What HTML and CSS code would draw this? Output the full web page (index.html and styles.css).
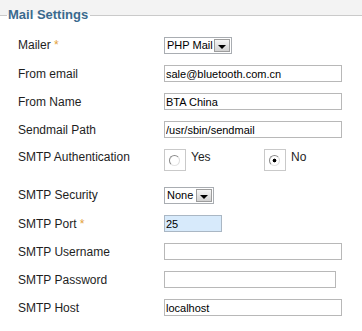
FILE: index.html
```html
<!DOCTYPE html>
<html lang="en">
<head>
    <meta charset="UTF-8">
    <meta name="viewport" content="width=device-width, initial-scale=1.0">
    <title>Mail Settings</title>
    <link rel="stylesheet" href="styles.css">
</head>
<body>
<form class="settings">
    <fieldset class="panel">
        <legend>Mail Settings</legend>
        <div class="rows">
            <div class="row">
                <label class="label">Mailer <span class="req">*</span></label>
                <div class="select select-mailer">
                    <span class="select-value">PHP Mail</span>
                    <span class="select-btn"></span>
                </div>
            </div>
            <div class="row">
                <label class="label" for="mailfrom">From email</label>
                <input class="text" id="mailfrom" type="text" value="sale@bluetooth.com.cn">
            </div>
            <div class="row">
                <label class="label" for="fromname">From Name</label>
                <input class="text" id="fromname" type="text" value="BTA China">
            </div>
            <div class="row">
                <label class="label" for="sendmail">Sendmail Path</label>
                <input class="text" id="sendmail" type="text" value="/usr/sbin/sendmail">
            </div>
            <div class="row row-radio">
                <span class="label">SMTP Authentication</span>
                <div class="radio-group">
                    <label class="radio-opt">
                        <span class="radio-box"><input type="radio" name="smtpauth" value="1"></span>
                        <span class="radio-text">Yes</span>
                    </label>
                    <label class="radio-opt">
                        <span class="radio-box"><input type="radio" name="smtpauth" value="0" checked></span>
                        <span class="radio-text">No</span>
                    </label>
                </div>
            </div>
            <div class="row">
                <label class="label">SMTP Security</label>
                <div class="select select-security">
                    <span class="select-value">None</span>
                    <span class="select-btn"></span>
                </div>
            </div>
            <div class="row">
                <label class="label" for="smtpport">SMTP Port <span class="req">*</span></label>
                <input class="text text-port" id="smtpport" type="text" value="25">
            </div>
            <div class="row">
                <label class="label" for="smtpuser">SMTP Username</label>
                <input class="text" id="smtpuser" type="text" value="">
            </div>
            <div class="row">
                <label class="label" for="smtppass">SMTP Password</label>
                <input class="text text-pass" id="smtppass" type="password" value="">
            </div>
            <div class="row">
                <label class="label" for="smtphost">SMTP Host</label>
                <input class="text" id="smtphost" type="text" value="localhost">
            </div>
        </div>
    </fieldset>
</form>
</body>
</html>
```

FILE: styles.css
```css
/* Mail settings panel */
body {
    margin: 0;
    padding-top: 7px;
    background-color: #f3f3f3;
    font-family: "Liberation Sans", Arial, sans-serif;
    color: #1e1e1e;
}
.settings {
    margin: 0;
}
.panel {
    margin: 0;
    min-width: 0;
    padding: 14px 0 30px 7px;
    border: 0;
    border-top: 1px solid #cacaca;
    background-color: #fff;
}
.panel legend {
    padding: 0 2px 0 1px;
    font-size: 13px;
    font-weight: bold;
    line-height: 16px;
    color: #3a6a8e;
}
.rows {
    display: flex;
    flex-direction: column;
    gap: 11px;
    margin-left: 11px;
}
.row {
    display: flex;
    align-items: baseline;
}
.label {
    width: 146px;
    flex-shrink: 0;
    font-size: 12px;
}
.req {
    color: #e3a23a;
}
.text {
    box-sizing: border-box;
    width: 178px;
    height: 17px;
    margin: 0;
    padding: 0 2px 0 1px;
    border: 1px solid #b8b8b8;
    border-radius: 0;
    background-color: #fff;
    font-family: "Liberation Sans", Arial, sans-serif;
    font-size: 11px;
    color: #000;
    outline: none;
}
.text-port {
    width: 58px;
    background-color: #d7eafb;
    border-color: #aab7c4;
}
.text-pass {
    width: 172px;
}
.select {
    box-sizing: border-box;
    display: flex;
    align-items: center;
    height: 17px;
    padding: 1px;
    border: 1px solid #a9adb2;
    background-color: #fff;
    font-size: 11px;
    color: #000;
}
.select-mailer {
    width: 68px;
}
.select-security {
    width: 50px;
}
.select-value {
    flex: 1;
    padding-left: 1px;
    line-height: 13px;
    white-space: nowrap;
}
.select-btn {
    box-sizing: border-box;
    display: flex;
    align-items: center;
    justify-content: center;
    width: 16px;
    height: 13px;
    border: 1px solid #9d9d9d;
    background: linear-gradient(#f6f6f6, #d2d2d2);
}
.select-btn::after {
    content: "";
    margin-top: 2px;
    border-top: 4px solid #000;
    border-left: 4px solid transparent;
    border-right: 4px solid transparent;
}
.row-radio {
    align-items: flex-start;
    margin-bottom: 5px;
}
.row-radio .label {
    padding-top: 1px;
}
.radio-group {
    display: flex;
}
.radio-opt {
    display: flex;
    align-items: flex-start;
    gap: 5px;
    width: 100px;
    font-size: 12px;
}
.radio-text {
    padding-top: 1px;
}
.radio-box {
    box-sizing: border-box;
    display: flex;
    align-items: center;
    justify-content: center;
    width: 22px;
    height: 22px;
    border: 1px solid #c9c9c9;
}
.radio-box input {
    appearance: none;
    box-sizing: border-box;
    width: 11px;
    height: 11px;
    margin: 0 2px 0 0;
    border: 1px solid;
    border-color: #8a8a8a #dcdcdc #e4e4e4 #8a8a8a;
    border-radius: 50%;
    background-color: #fff;
}
.radio-box input:checked {
    background: radial-gradient(circle, #000 1.6px, #fff 2.2px);
}
```
